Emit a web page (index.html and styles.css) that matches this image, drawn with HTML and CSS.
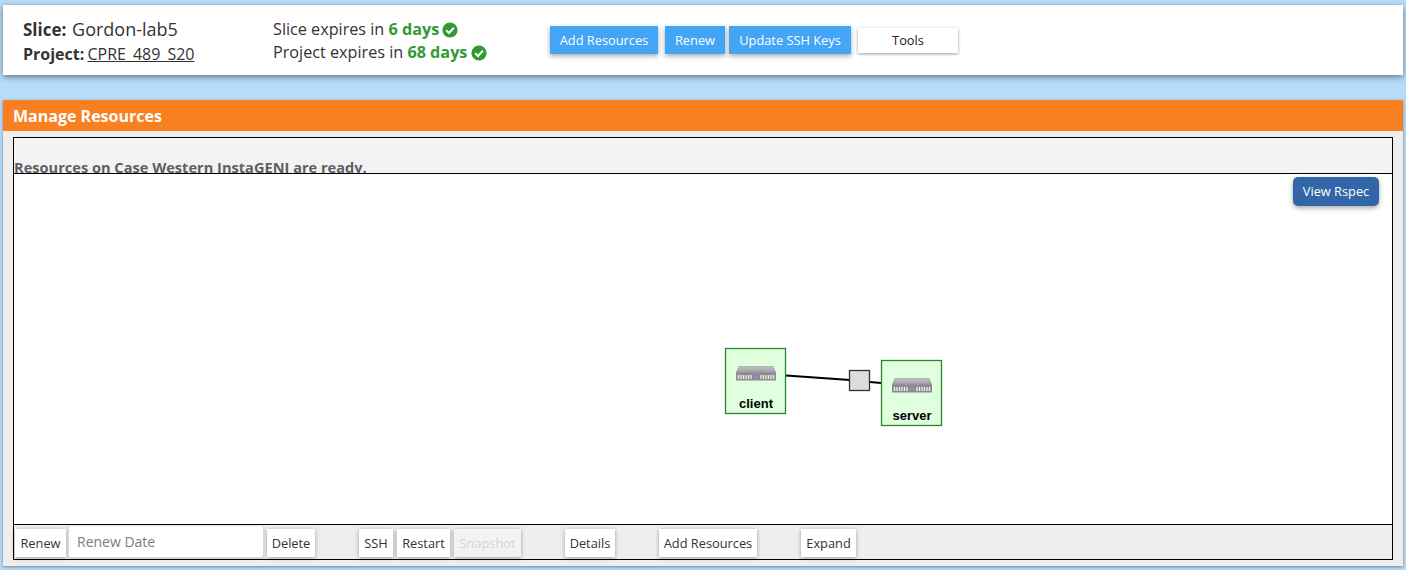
FILE: index.html
```html
<!DOCTYPE html>
<html lang="en">
<head>
    <meta charset="UTF-8">
    <meta name="viewport" content="width=device-width, initial-scale=1.0">
    <title>Manage Resources</title>
    <link rel="stylesheet" href="styles.css">
</head>
<body>
    <svg class="icon-defs" width="0" height="0">
        <defs>
            <symbol id="check" viewBox="0 0 16 16">
                <circle cx="8" cy="8" r="7.6" fill="#339933"/>
                <path d="M4.200 8.300 L7 11 L11.900 5.800" fill="none" stroke="#fff" stroke-width="2"/>
            </symbol>
            <linearGradient id="switch-top" x1="0" y1="0" x2="0" y2="1">
                <stop offset="0" stop-color="#c4c4c8"/>
                <stop offset="1" stop-color="#98989c"/>
            </linearGradient>
            <g id="switch">
                <path d="M3 0.500 H37 L40 7 H0 Z" fill="url(#switch-top)" stroke="#8a8a8e" stroke-width="0.5"/>
                <rect x="0" y="7" width="40" height="7.500" fill="#8c8c90"/>
                <path d="M2.500 9 v4 M5 9 v4 M7.500 9 v4 M10 9 v4 M12.500 9 v4 M15 9 v4 M25 9 v4 M27.500 9 v4 M30 9 v4 M32.500 9 v4 M35 9 v4 M37.500 9 v4" stroke="#f0f0f0" stroke-width="1.300"/>
                <path d="M18 11 h4" stroke="#8a8af5" stroke-width="2"/>
            </g>
        </defs>
    </svg>

    <header class="slice-header">
        <div class="slice-names">
            <div class="slice-name"><b>Slice:</b> Gordon-lab5</div>
            <div><b>Project:</b> <a href="#">CPRE_489_S20</a></div>
        </div>
        <div class="slice-expiry">
            <div>Slice expires in <b>6 days</b> <svg class="check"><use href="#check"/></svg></div>
            <div>Project expires in <b>68 days</b> <svg class="check"><use href="#check"/></svg></div>
        </div>
        <div class="slice-actions">
            <button class="btn-blue">Add Resources</button>
            <button class="btn-blue">Renew</button>
            <button class="btn-blue">Update SSH Keys</button>
            <button class="btn-tools">Tools</button>
        </div>
    </header>

    <section class="panel">
        <h2 class="panel-title">Manage Resources</h2>
        <div class="panel-body">
            <div class="status-bar">
                <p class="status-text">Resources on Case Western InstaGENI are ready.</p>
            </div>
            <div class="topology">
                <button class="btn-rspec">View Rspec</button>
                <svg class="topology-map" width="1378" height="350" viewBox="14 174 1378 350">
                    <path d="M786 375.500 L850 380 M870 382 L881 383" stroke="#000" stroke-width="2" fill="none"/>
                    <rect x="849.500" y="370.500" width="20" height="20" fill="#dcdcdc" stroke="#333" stroke-width="1.300"/>
                    <rect class="node" x="725.500" y="348.500" width="60" height="65"/>
                    <use href="#switch" x="736" y="366"/>
                    <text class="node-label" x="756" y="408">client</text>
                    <rect class="node" x="881.500" y="360.500" width="60" height="65"/>
                    <use href="#switch" x="892" y="378"/>
                    <text class="node-label" x="912" y="420">server</text>
                </svg>
            </div>
            <div class="toolbar">
                <button class="tool-renew">Renew</button>
                <input class="renew-date" type="text" placeholder="Renew Date">
                <button class="tool-delete">Delete</button>
                <button class="group-start tool-ssh">SSH</button>
                <button class="tool-restart">Restart</button>
                <button class="disabled tool-snapshot">Snapshot</button>
                <button class="group-start tool-details">Details</button>
                <button class="group-start tool-add">Add Resources</button>
                <button class="group-start tool-expand">Expand</button>
            </div>
        </div>
    </section>
</body>
</html>
```

FILE: styles.css
```css
* {
    box-sizing: border-box;
}

body {
    margin: 0;
    height: 570px;
    overflow: hidden;
    padding: 5px 3px 0;
    background-color: #b7dbf8;
    font-family: "Open Sans", sans-serif;
    color: #333;
}

.icon-defs {
    position: absolute;
}

button {
    font-family: "Open Sans", sans-serif;
    font-size: 12.8px;
    border: none;
    border-radius: 0;
    padding: 0;
    cursor: pointer;
}

.slice-header {
    display: flex;
    align-items: flex-start;
    height: 70px;
    background-color: #fff;
    box-shadow: 0 2px 6px rgba(0, 0, 0, 0.45);
}

.slice-names {
    width: 270px;
    padding: 12px 0 0 20px;
    font-size: 16px;
    line-height: 24px;
}

.slice-name {
    font-size: 18px;
    word-spacing: 1px;
}

.slice-name b {
    font-size: 17px;
}

.slice-names a {
    margin-left: -1px;
    color: #333;
}

.slice-expiry {
    width: 277px;
    padding-top: 13px;
    font-size: 16.2px;
    line-height: 23px;
}

.slice-expiry b {
    color: #339933;
}

.check {
    width: 16px;
    height: 16px;
    margin-left: -1px;
    vertical-align: -3px;
}

.slice-actions {
    display: flex;
    align-items: center;
    gap: 4px;
    padding-top: 21px;
}

.btn-blue {
    width: 108px;
    height: 28px;
    background-color: #42a5f5;
    color: #fff;
    box-shadow: 0 2px 5px rgba(0, 0, 0, 0.35);
}

.btn-blue:nth-child(2) {
    width: 60px;
    margin-left: 3px;
}

.btn-blue:nth-child(3) {
    width: 122px;
}

.btn-tools {
    width: 100px;
    height: 25px;
    margin-left: 3px;
    background-color: #fff;
    color: #222;
    box-shadow: 0 1px 3px rgba(0, 0, 0, 0.4);
}

.panel {
    height: 466px;
    margin-top: 25px;
    background-color: #eee;
    box-shadow: 0 1px 3px rgba(0, 0, 0, 0.4);
}

.panel-title {
    margin: 0;
    height: 31px;
    padding-left: 10px;
    background-color: #f98021;
    color: #fff;
    font-size: 16px;
    font-weight: 700;
    line-height: 32px;
}

.panel-body {
    height: 423px;
    margin: 6px 10px 0;
    border: 1px solid #000;
}

.status-bar {
    height: 36px;
    overflow: hidden;
    background-color: #f3f3f3;
    border-bottom: 1px solid #000;
}

.status-text {
    margin: 0;
    padding-top: 19px;
    color: #5f5f5f;
    font-size: 14.6px;
    font-weight: 700;
    line-height: 20px;
}

.topology {
    position: relative;
    height: 351px;
    background-color: #fff;
    border-bottom: 1px solid #000;
}

.topology-map {
    display: block;
}

.btn-rspec {
    position: absolute;
    top: 3px;
    right: 13px;
    width: 86px;
    height: 29px;
    padding-bottom: 1px;
    background-color: #3366a8;
    color: #fff;
    border-radius: 5px;
    box-shadow: 0 2px 5px rgba(0, 0, 0, 0.35);
}

.node {
    fill: #dfffdf;
    stroke: #2a862a;
    stroke-width: 1.300;
}

.node-label {
    font-family: "Liberation Sans", Arial, sans-serif;
    font-size: 13px;
    font-weight: 700;
    fill: #000;
    text-anchor: middle;
}

.toolbar {
    display: flex;
    align-items: flex-start;
    gap: 4px;
    height: 34px;
    padding-left: 1px;
}

.toolbar button {
    height: 28px;
    margin-top: 4px;
    background-color: #fff;
    color: #333;
    box-shadow: 0 1px 4px rgba(0, 0, 0, 0.35);
}

.toolbar .tool-renew { width: 51px; }
.toolbar .tool-delete { width: 48px; margin-left: -1px; }
.toolbar .tool-ssh { width: 34px; }
.toolbar .tool-restart { width: 53px; }
.toolbar .tool-snapshot { width: 67px; }
.toolbar .tool-details { width: 50px; }
.toolbar .tool-add { width: 98px; }
.toolbar .tool-expand { width: 55px; }

.toolbar button.group-start {
    margin-left: 40px;
}

.toolbar button.disabled {
    color: #d5d5d5;
    background-color: #f3f3f3;
}

.renew-date {
    width: 196px;
    height: 33px;
    margin-left: -2px;
    padding: 0 8px;
    border: 1px solid #ddd;
    border-radius: 3px;
    background-color: #fff;
    font-family: "Open Sans", sans-serif;
    font-size: 14px;
    box-shadow: 0 1px 2px rgba(0, 0, 0, 0.2);
}

.renew-date::placeholder {
    color: #7c7c7c;
}
```
